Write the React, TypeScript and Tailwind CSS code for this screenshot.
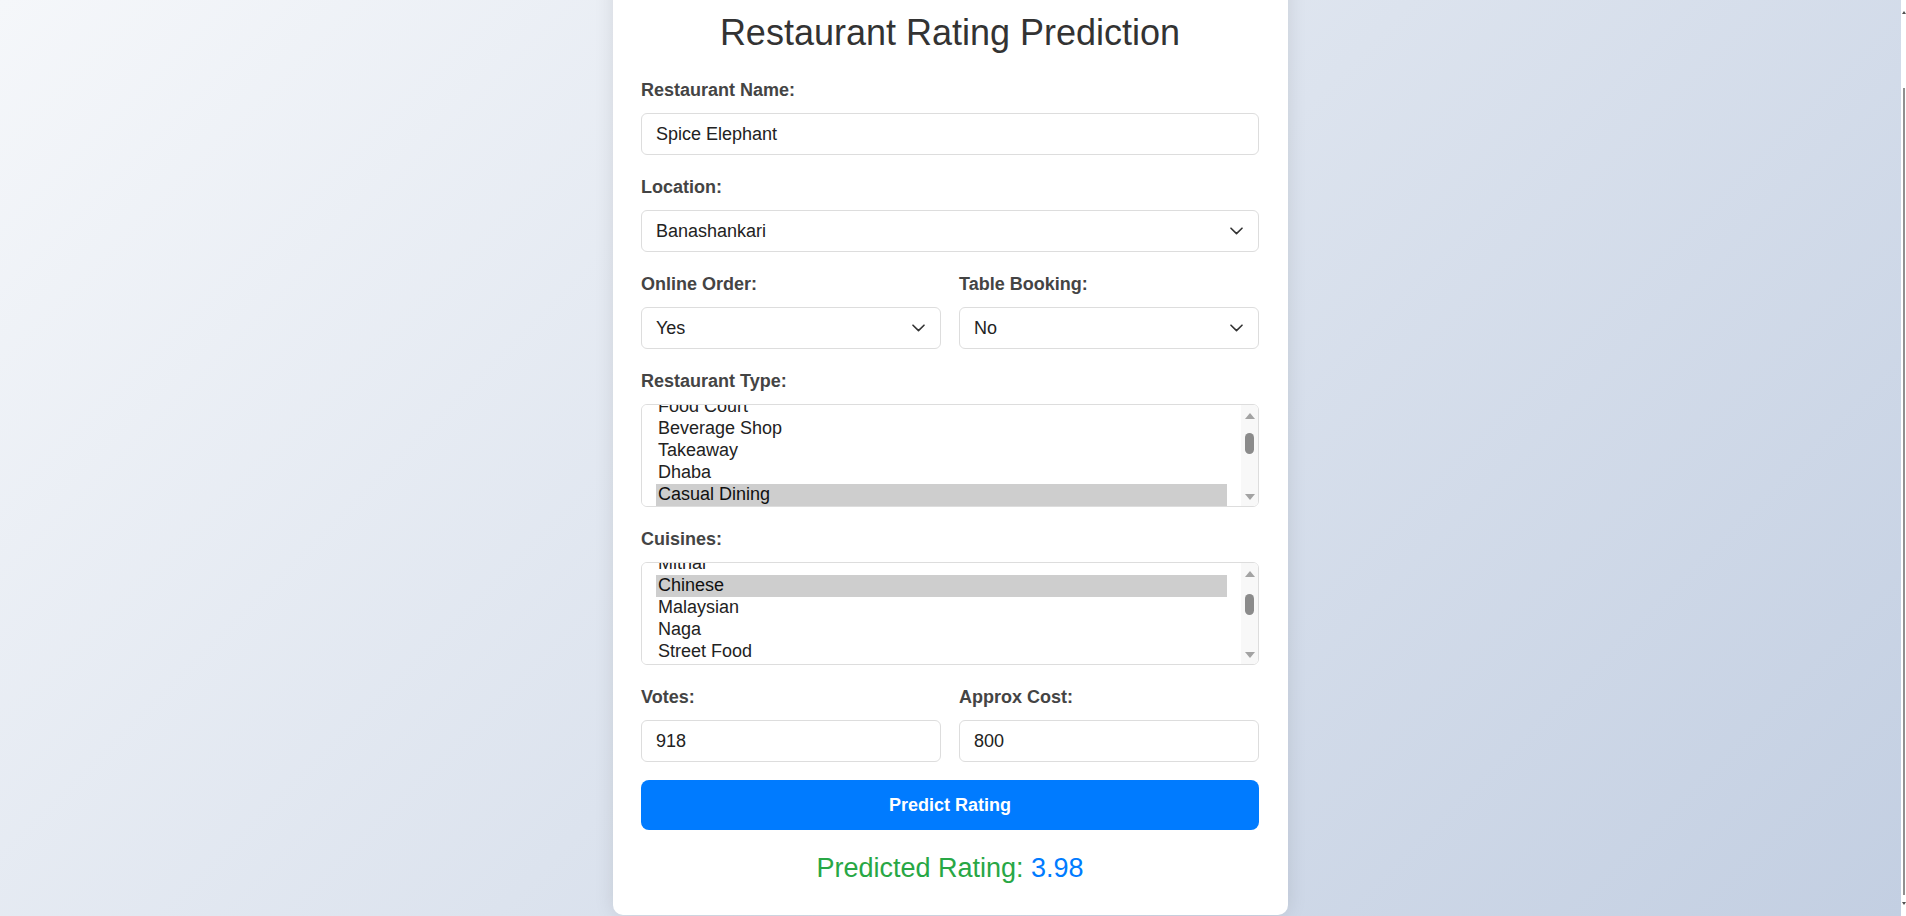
import { useEffect, useRef } from "react";

const locations = ["Banashankari", "Basavanagudi", "Jayanagar", "JP Nagar", "Koramangala", "Indiranagar", "Whitefield", "HSR", "BTM", "Marathahalli"];

const restTypes = [
  "Quick Bites",
  "Food Court",
  "Beverage Shop",
  "Takeaway",
  "Dhaba",
  "Casual Dining",
  "Cafe",
  "Delivery",
  "Dessert Parlor",
  "Bakery",
  "Sweet Shop",
  "Bar",
  "Pub",
  "Fine Dining",
  "Kiosk",
  "Lounge",
];

const cuisines = [
  "North Indian",
  "Mithai",
  "Chinese",
  "Malaysian",
  "Naga",
  "Street Food",
  "South Indian",
  "Biryani",
  "Fast Food",
  "Continental",
  "Desserts",
  "Italian",
  "Beverages",
  "Bakery",
  "Pizza",
  "Thai",
];

const labelCls = "block text-[18px] leading-[21px] font-bold text-[#444] mb-[12px]";
const fieldCls =
  "block w-full h-[42px] px-[14px] text-[18px] text-[#222] bg-white border border-[#dddddd] rounded-[6px] outline-none";
const selectCls = fieldCls + " appearance-none pr-[36px]";
const listCls =
  "block w-full h-[103px] pl-[14px] pr-[31px] py-0 text-[18px] text-[#222] bg-white border border-[#dddddd] rounded-[6px] outline-none";

// scroll a listbox so that option `index` sits `offset` px below the inner top edge
function scrollListTo(sel: HTMLSelectElement | null, index: number, offset: number) {
  if (!sel) return;
  const opt = sel.options[index];
  if (!opt) return;
  const r = opt.getBoundingClientRect();
  const s = sel.getBoundingClientRect();
  if (r.height > 0) {
    sel.scrollTop += r.top - s.top - sel.clientTop - offset;
  } else {
    sel.scrollTop = index * 22 - offset;
  }
}

function Chevron() {
  return (
    <svg
      width="13"
      height="8"
      viewBox="0 0 13 8"
      className="pointer-events-none absolute right-[16px] top-1/2 -translate-y-1/2"
    >
      <path d="M1 1.2 L6.5 6.6 L12 1.2" fill="none" stroke="#333" strokeWidth="1.6" strokeLinecap="round" strokeLinejoin="round" />
    </svg>
  );
}

function Select({ options, value }: { options: string[]; value: string }) {
  return (
    <div className="relative">
      <select defaultValue={value} className={selectCls}>
        {options.map((o) => (
          <option key={o}>{o}</option>
        ))}
      </select>
      <Chevron />
    </div>
  );
}

// drawn scrollbar laid over the right edge of a listbox
function ListScrollbar({ thumbTop }: { thumbTop: number }) {
  return (
    <div className="pointer-events-none absolute right-[1px] top-[1px] bottom-[1px] w-[17px] flex flex-col bg-[#f8f8f8] rounded-r-[5px]">
      <div className="h-[17px] flex items-center justify-center pt-[4px]">
        <svg width="10" height="6" viewBox="0 0 10 6">
          <path d="M0 6 L5 0 L10 6 Z" fill="#a3a3a3" />
        </svg>
      </div>
      <div className="flex-1 flex justify-center">
        <div className="w-[9px] h-[21px] rounded-full bg-[#8b8b8b]" style={{ marginTop: thumbTop }} />
      </div>
      <div className="h-[17px] flex items-center justify-center pb-[2px]">
        <svg width="10" height="6" viewBox="0 0 10 6">
          <path d="M0 0 L10 0 L5 6 Z" fill="#a3a3a3" />
        </svg>
      </div>
    </div>
  );
}

function Listbox({
  items,
  value,
  selRef,
  thumbTop,
}: {
  items: string[];
  value: string;
  selRef: React.RefObject<HTMLSelectElement | null>;
  thumbTop: number;
}) {
  return (
    <div className="relative">
      <select ref={selRef} multiple defaultValue={[value]} className={listCls}>
        {items.map((t) => (
          <option key={t} className="px-[2px] pb-[1px] leading-[21px]">
            {t}
          </option>
        ))}
      </select>
      <ListScrollbar thumbTop={thumbTop} />
    </div>
  );
}

export default function App() {
  const pageRef = useRef<HTMLDivElement>(null);
  const typeRef = useRef<HTMLSelectElement>(null);
  const cuisineRef = useRef<HTMLSelectElement>(null);

  useEffect(() => {
    scrollListTo(typeRef.current, 1, -9);
    scrollListTo(cuisineRef.current, 2, 12);
    const p = pageRef.current;
    if (p) p.scrollTop = p.scrollHeight;
  }, []);

  return (
    <div className="flex h-screen font-['Liberation_Sans',Arial,sans-serif]">
      <div
        ref={pageRef}
        className="flex-1 overflow-y-scroll bg-[linear-gradient(135deg,#f5f7fa_0%,#c3cfe2_100%)]"
      >
        <div className="flex justify-center pt-[48px] pb-[1px]">
          <div className="w-[675px] bg-white rounded-[10px] shadow-[0_0_20px_rgba(0,0,0,0.1)] pt-[30px] pb-[31px] pl-[28px] pr-[29px]">
            <h1 className="mt-[24px] mb-[27px] text-center text-[36px] leading-[41px] font-normal text-[#333]">
              Restaurant Rating Prediction
            </h1>

            <form onSubmit={(e) => e.preventDefault()}>
              <div className="mb-[22px]">
                <label className={labelCls}>Restaurant Name:</label>
                <input type="text" defaultValue="Spice Elephant" className={fieldCls} />
              </div>

              <div className="mb-[22px]">
                <label className={labelCls}>Location:</label>
                <Select options={locations} value="Banashankari" />
              </div>

              <div className="grid grid-cols-2 gap-x-[18px] mb-[22px]">
                <div>
                  <label className={labelCls}>Online Order:</label>
                  <Select options={["Yes", "No"]} value="Yes" />
                </div>
                <div>
                  <label className={labelCls}>Table Booking:</label>
                  <Select options={["Yes", "No"]} value="No" />
                </div>
              </div>

              <div className="mb-[22px]">
                <label className={labelCls}>Restaurant Type:</label>
                <Listbox items={restTypes} value="Casual Dining" selRef={typeRef} thumbTop={11} />
              </div>

              <div className="mb-[22px]">
                <label className={labelCls}>Cuisines:</label>
                <Listbox items={cuisines} value="Chinese" selRef={cuisineRef} thumbTop={14} />
              </div>

              <div className="grid grid-cols-2 gap-x-[18px] mb-[18px]">
                <div>
                  <label className={labelCls}>Votes:</label>
                  <input type="number" defaultValue="918" className={fieldCls} />
                </div>
                <div>
                  <label className={labelCls}>Approx Cost:</label>
                  <input type="number" defaultValue="800" className={fieldCls} />
                </div>
              </div>

              <button
                type="submit"
                className="block w-full h-[50px] bg-[#007bff] text-white text-[18px] font-bold rounded-[8px]"
              >
                Predict Rating
              </button>
            </form>

            <div className="mt-[23px] text-center text-[27px] leading-[31px] text-[#28a745]">
              Predicted Rating: <span className="text-[#007bff]">3.98</span>
            </div>
          </div>
        </div>
      </div>

      {/* page scrollbar, drawn */}
      <div className="w-[5px] bg-white flex flex-col items-end">
        <div className="h-[15px] w-full flex items-end justify-end">
          <svg width="4" height="3" viewBox="0 0 4 3" className="mb-[1px]">
            <path d="M0 3 L2 0 L4 3 Z" fill="#505050" />
          </svg>
        </div>
        <div className="flex-1 w-full flex justify-end pr-[1px]">
          <div className="w-[2px] mt-[73px] mb-[6px] bg-[#909090]" />
        </div>
        <div className="h-[15px] w-full flex items-start justify-end">
          <svg width="4" height="3" viewBox="0 0 4 3" className="mt-[1px]">
            <path d="M0 0 L4 0 L2 3 Z" fill="#505050" />
          </svg>
        </div>
      </div>
    </div>
  );
}
